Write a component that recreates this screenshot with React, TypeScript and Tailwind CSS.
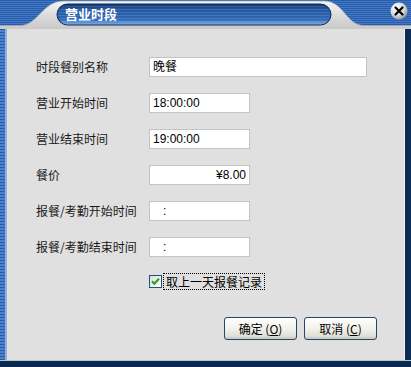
import React from 'react';

const cjk = "font-['Noto_Sans_CJK_SC','Noto_Sans',sans-serif]";
const num = "font-['Liberation_Sans','Noto_Sans_CJK_SC',sans-serif]";

// 标题栏上的银色凸起 + 深蓝胶囊
function TitleDecor() {
  return (
    <svg className="absolute inset-0" width="411" height="29" viewBox="0 0 411 29">
      <defs>
        <linearGradient id="silver" x1="0" y1="0" x2="0" y2="1">
          <stop offset="0" stopColor="#f6f6f6" />
          <stop offset="0.5" stopColor="#dcdcdc" />
          <stop offset="1" stopColor="#c9c9c9" />
        </linearGradient>
        <linearGradient id="pill" x1="0" y1="0" x2="0" y2="1">
          <stop offset="0" stopColor="#12356a" />
          <stop offset="0.25" stopColor="#2458a4" />
          <stop offset="0.75" stopColor="#2f68b8" />
          <stop offset="1" stopColor="#8ab6ea" />
        </linearGradient>
        <pattern id="lines" width="4" height="3" patternUnits="userSpaceOnUse">
          <rect width="4" height="1" fill="#ffffff" opacity="0.12" />
        </pattern>
      </defs>
      <path
        d="M0 25.5 L20 25.5 C38 25.5 42 1 64 1 L324 1 C344 1 346 25.5 364 25.5 L411 25.5 L411 29 L0 29 Z"
        fill="url(#silver)"
      />
      <path d="M0 25.5 L20 25.5 C38 25.5 42 1 64 1 L324 1 C344 1 346 25.5 364 25.5 L411 25.5" fill="none" stroke="#9aa8bc" strokeWidth="0.8" />
      <rect x="57" y="4" width="274" height="21" rx="10.5" fill="url(#pill)" stroke="#0e2a56" strokeWidth="1" />
      <rect x="58" y="5" width="272" height="19" rx="9.5" fill="url(#lines)" />
    </svg>
  );
}

function CloseButton() {
  return (
    <svg width="18" height="18" viewBox="0 0 18 18">
      <defs>
        <radialGradient id="cb" cx="0.35" cy="0.3" r="0.8">
          <stop offset="0" stopColor="#ffffff" />
          <stop offset="0.6" stopColor="#d4d4d4" />
          <stop offset="1" stopColor="#8a8a8a" />
        </radialGradient>
      </defs>
      <circle cx="9" cy="9" r="8.5" fill="url(#cb)" />
      <path d="M5.5 5.5 L12.5 12.5 M12.5 5.5 L5.5 12.5" stroke="#000" strokeWidth="2.2" strokeLinecap="round" />
    </svg>
  );
}

function Field({ label, value, wide, right }: { label: string; value: string; wide?: boolean; right?: boolean }) {
  return (
    <>
      <div className={`${cjk} text-[12px] text-[#1a1a1a] flex items-center h-[20px]`}>{label}</div>
      <div
        className={`${num} h-[20px] ${wide ? 'w-[218px]' : 'w-[101px]'} bg-white border border-[#c4c4c4] text-[12px] leading-[18px] text-black px-[3px] ${right ? 'text-right' : ''} whitespace-pre`}
      >
        {value}
      </div>
    </>
  );
}

function Btn({ text, k }: { text: string; k: string }) {
  return (
    <button className="w-[73px] h-[23px] rounded-[3px] border border-[#23456e] bg-gradient-to-b from-white via-[#f2f1ec] to-[#d9d8d0] shadow-[inset_0_-2px_0_#cfcdc4] flex items-center justify-center">
      <span className={`${cjk} text-[12px] text-black`}>
        {text} (<span className="underline">{k}</span>)
      </span>
    </button>
  );
}

export default function App() {
  return (
    <div className="w-[411px] h-[367px] flex flex-col overflow-hidden bg-[#0c2c54]">
      {/* 标题栏 */}
      <div className="relative h-[29px] shrink-0 bg-[repeating-linear-gradient(to_bottom,#2a5da8_0px,#2a5da8_1px,#4077c6_1px,#4077c6_2px)] flex items-start">
        <TitleDecor />
        <div className={`relative ${cjk} text-[13px] font-bold text-white pl-[65px] pt-[6px] leading-[16px]`}>营业时段</div>
        <div className="relative ml-auto mr-[3px] mt-[2px]">
          <CloseButton />
        </div>
      </div>

      <div className="flex flex-1">
        {/* 左边框 */}
        <div className="w-[7px] bg-[repeating-linear-gradient(to_bottom,#2a5da8_0px,#2a5da8_1px,#4a80cc_1px,#4a80cc_3px)] border-r-2 border-[#8fb0dc]" />

        {/* 主体 */}
        <div className="flex-1 bg-[#e0e0e0] flex flex-col pt-[28px] pl-[29px] pr-[27px] border-r border-[#f4f4f4]">
          <div className="grid grid-cols-[113px_auto] gap-y-[16px] items-center">
            <Field label="时段餐别名称" value="晚餐" wide />
            <Field label="营业开始时间" value="18:00:00" />
            <Field label="营业结束时间" value="19:00:00" />
            <Field label="餐价" value="¥8.00" right />
            <Field label="报餐/考勤开始时间" value="   :" />
            <Field label="报餐/考勤结束时间" value="   :" />
          </div>

          <div className="flex items-center mt-[16px] ml-[113px] h-[17px]">
            <svg width="13" height="13" viewBox="0 0 13 13">
              <defs>
                <linearGradient id="chk" x1="0" y1="0" x2="1" y2="1">
                  <stop offset="0" stopColor="#dcdcd6" />
                  <stop offset="1" stopColor="#ffffff" />
                </linearGradient>
              </defs>
              <rect x="0.5" y="0.5" width="12" height="12" fill="url(#chk)" stroke="#1c5180" />
              <path d="M3 6.3 L5.3 8.8 L10 3.8" fill="none" stroke="#21a121" strokeWidth="2" />
            </svg>
            <span className={`${cjk} ml-[1px] text-[12px] leading-[15px] text-black border border-dotted border-black px-[2px]`}>取上一天报餐记录</span>
          </div>

          <div className="flex justify-end gap-[7px] mt-[27px]">
            <Btn text="确定" k="O" />
            <Btn text="取消" k="C" />
          </div>
        </div>

        {/* 右边框 */}
        <div className="w-[6px] bg-[#0c2c54]" />
      </div>

      {/* 底边 */}
      <div className="h-[7px] shrink-0 bg-[#0a2a50] border-t border-[#b8c4d4]" />
    </div>
  );
}
